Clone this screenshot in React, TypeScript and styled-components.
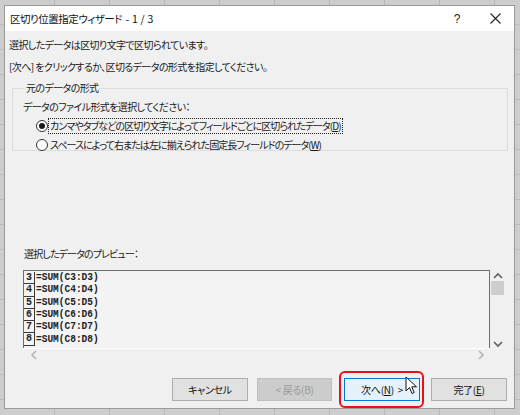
import React from 'react';
import styled, { createGlobalStyle, css } from 'styled-components';

const GlobalStyle = createGlobalStyle`
  html, body {
    margin: 0;
    padding: 0;
    background: #cfcfcf;
  }
  * {
    box-sizing: border-box;
  }
`;

const uiFont = `"Noto Sans CJK JP", "Noto Sans", sans-serif`;

const Desktop = styled.div`
  width: 520px;
  height: 415px;
  padding: 5px 5px 6px 4px;
  background-color: #cdcdcd;
  background-image:
    repeating-linear-gradient(to right, transparent 0 54px, #b8b8b8 54px 55px),
    repeating-linear-gradient(to bottom, transparent 0 24px, #bcbcbc 24px 25px);
  overflow: hidden;
`;

const Window = styled.div`
  width: 511px;
  height: 404px;
  display: flex;
  flex-direction: column;
  background: #f0f0f0;
  border: 1px solid #9a9a9a;
  font-family: ${uiFont};
  font-feature-settings: "palt";
  font-size: 10px;
  letter-spacing: -0.6px;
  color: #1a1a1a;
`;

const TitleBar = styled.div`
  height: 25px;
  flex: none;
  display: flex;
  align-items: center;
  background: #ffffff;
  padding-left: 5px;
`;

const Title = styled.div`
  flex: 1;
  font-size: 10.5px;
  letter-spacing: -0.5px;
  word-spacing: 1.5px;
  color: #111;
`;

const TitleButton = styled.div`
  width: 38px;
  height: 25px;
  display: flex;
  align-items: center;
  justify-content: center;
  font-family: "Liberation Sans", sans-serif;
  font-size: 12px;
  letter-spacing: 0;
  color: #222;
`;

const Body = styled.div`
  flex: 1;
  display: flex;
  flex-direction: column;
  padding: 5px 6px 0 4px;
  position: relative;
`;

const Message = styled.div<{ $gap?: number }>`
  line-height: 16px;
  margin-top: ${(p) => p.$gap ?? 0}px;
  white-space: nowrap;
`;

const GroupBox = styled.fieldset`
  margin: 6px 0 0 3px;
  padding: 1px 0 0 10px;
  height: 70px;
  border: 1px solid #dcdcdc;
  border-radius: 0;
  min-width: 0;
`;

const Legend = styled.legend`
  padding: 0 1px;
  margin-left: 2px;
  line-height: 14px;
`;

const Prompt = styled.div`
  line-height: 16px;
  margin-top: 3px;
`;

const RadioRow = styled.div`
  display: flex;
  align-items: center;
  margin-left: 13px;
  margin-top: 3px;
  height: 16px;
`;

const RadioCircle = styled.span<{ $checked?: boolean }>`
  width: 12px;
  height: 12px;
  border-radius: 50%;
  border: 1px solid #333;
  background: #fff;
  display: flex;
  align-items: center;
  justify-content: center;
  flex: none;
  &::after {
    content: '';
    width: 6px;
    height: 6px;
    border-radius: 50%;
    background: ${(p) => (p.$checked ? '#1a1a1a' : 'transparent')};
  }
`;

const RadioLabel = styled.span<{ $focused?: boolean }>`
  padding: 0 1px;
  line-height: 14px;
  letter-spacing: -0.95px;
  white-space: nowrap;
  border: 1px dotted ${(p) => (p.$focused ? '#222' : 'transparent')};
`;

const Key = styled.span`
  text-decoration: underline;
`;

const PreviewLabel = styled.div`
  margin: 95px 0 0 15px;
  line-height: 16px;
  letter-spacing: -0.85px;
`;

const Preview = styled.div`
  margin: 8px 0 0 14px;
  width: 482px;
  display: grid;
  grid-template-columns: 1fr 15px;
  grid-template-rows: 78px 13px;
`;

const ListArea = styled.div`
  border: 1px solid #6d6d6d;
  border-bottom: none;
  background: #f3f3f3;
  overflow: hidden;
  padding-top: 1px;
`;

const DataRow = styled.div`
  display: flex;
  height: 12.3px;
  align-items: center;
`;

const RowNo = styled.span`
  width: 11px;
  height: 12.3px;
  border-right: 1px solid #3a3a3a;
  border-bottom: 1px solid #3a3a3a;
  font-family: "Liberation Mono", monospace;
  font-size: 10px;
  font-weight: bold;
  letter-spacing: 0;
  line-height: 12px;
  text-align: center;
  color: #222;
`;

const Formula = styled.span`
  padding-left: 1px;
  font-family: "Liberation Mono", monospace;
  font-size: 9.5px;
  font-weight: bold;
  letter-spacing: 0;
  line-height: 12px;
  color: #222;
  transform: scaleY(1.1);
`;

const VScroll = styled.div`
  display: flex;
  flex-direction: column;
  align-items: center;
  background: #f0f0f0;
  padding-top: 2px;
`;

const Thumb = styled.div`
  width: 13px;
  height: 14px;
  background: #cdcdcd;
  margin-top: 1px;
  flex: none;
`;

const Spacer = styled.div`
  flex: 1;
`;

const HScroll = styled.div`
  display: flex;
  justify-content: space-between;
  align-items: center;
  padding: 0 5px 0 7px;
  background: #f0f0f0;
  border-top: 1px solid #fff;
`;

const Corner = styled.div`
  background: #f0f0f0;
`;

const ButtonRow = styled.div`
  display: flex;
  justify-content: flex-end;
  align-items: center;
  gap: 9px;
  margin-top: 17px;
  padding-right: 1px;
`;

const Button = styled.div<{ $variant?: 'default' | 'disabled' | 'focus' }>`
  position: relative;
  width: 76px;
  height: 23px;
  display: flex;
  align-items: center;
  justify-content: center;
  font-size: 10px;
  letter-spacing: -0.3px;
  border: 1px solid #adadad;
  background: #e1e1e1;
  color: #111;
  ${(p) =>
    p.$variant === 'disabled' &&
    css`
      background: #cccccc;
      border-color: #bfbfbf;
      color: #9a9a9a;
      width: 75px;
    `}
  ${(p) =>
    p.$variant === 'focus' &&
    css`
      background: #e5f1fb;
      border-color: #0078d7;
      margin: 0 2px 0 3px;
      &::after {
        content: '';
        position: absolute;
        top: -8px;
        bottom: -8px;
        left: -6px;
        right: -5px;
        border: 2.5px solid #e8101b;
        border-radius: 6px;
      }
    `}
`;

const Pointer = styled.svg`
  position: absolute;
  left: 400px;
  top: 345px;
`;

const Chevron: React.FC<{ dir: 'up' | 'down' | 'left' | 'right'; color?: string }> = ({ dir, color = '#606060' }) => {
  const paths: Record<string, string> = {
    up: 'M1 6 L5 2 L9 6',
    down: 'M1 2 L5 6 L9 2',
    left: 'M6 1 L2 5 L6 9',
    right: 'M2 1 L6 5 L2 9',
  };
  const vertical = dir === 'up' || dir === 'down';
  return (
    <svg width={vertical ? 10 : 8} height={vertical ? 8 : 10} viewBox={vertical ? '0 0 10 8' : '0 0 8 10'}>
      <path d={paths[dir]} fill="none" stroke={color} strokeWidth="1.6" />
    </svg>
  );
};

const rows = [3, 4, 5, 6, 7, 8];

const App: React.FC = () => {
  return (
    <>
      <GlobalStyle />
      <Desktop>
        <Window>
          <TitleBar>
            <Title>区切り位置指定ウィザード - 1 / 3</Title>
            <TitleButton>?</TitleButton>
            <TitleButton>
              <svg width="11" height="11" viewBox="0 0 11 11">
                <path d="M0.5 0.5 L10.5 10.5 M10.5 0.5 L0.5 10.5" stroke="#222" strokeWidth="1.1" />
              </svg>
            </TitleButton>
          </TitleBar>
          <Body>
            <Message $gap={1}>選択したデータは区切り文字で区切られています。</Message>
            <Message $gap={6}>[次へ] をクリックするか、区切るデータの形式を指定してください。</Message>

            <GroupBox>
              <Legend>元のデータの形式</Legend>
              <Prompt>データのファイル形式を選択してください：</Prompt>
              <RadioRow>
                <RadioCircle $checked />
                <RadioLabel $focused>
                  カンマやタブなどの区切り文字によってフィールドごとに区切られたデータ(<Key>D</Key>)
                </RadioLabel>
              </RadioRow>
              <RadioRow>
                <RadioCircle />
                <RadioLabel>
                  スペースによって右または左に揃えられた固定長フィールドのデータ(<Key>W</Key>)
                </RadioLabel>
              </RadioRow>
            </GroupBox>

            <PreviewLabel>選択したデータのプレビュー：</PreviewLabel>
            <Preview>
              <ListArea>
                {rows.map((n) => (
                  <DataRow key={n}>
                    <RowNo>{n}</RowNo>
                    <Formula>{`=SUM(C${n}:D${n})`}</Formula>
                  </DataRow>
                ))}
              </ListArea>
              <VScroll>
                <Chevron dir="up" />
                <Thumb />
                <Spacer />
                <Chevron dir="down" />
              </VScroll>
              <HScroll>
                <Chevron dir="left" color="#b5b5b5" />
                <Chevron dir="right" color="#b5b5b5" />
              </HScroll>
              <Corner />
            </Preview>

            <ButtonRow>
              <Button>キャンセル</Button>
              <Button $variant="disabled">&lt; 戻る(B)</Button>
              <Button $variant="focus">
                次へ(<Key>N</Key>)&nbsp;&nbsp;&gt;
              </Button>
              <Button>
                完了(<Key>E</Key>)
              </Button>
            </ButtonRow>

            <Pointer width="14" height="20" viewBox="0 0 14 20">
              <path
                d="M1 1 L1 15 L4.5 11.5 L7 17.5 L9.2 16.5 L6.8 10.8 L11.5 10.8 Z"
                fill="#fff"
                stroke="#111"
                strokeWidth="1"
                strokeLinejoin="round"
              />
            </Pointer>
          </Body>
        </Window>
      </Desktop>
    </>
  );
};

export default App;
